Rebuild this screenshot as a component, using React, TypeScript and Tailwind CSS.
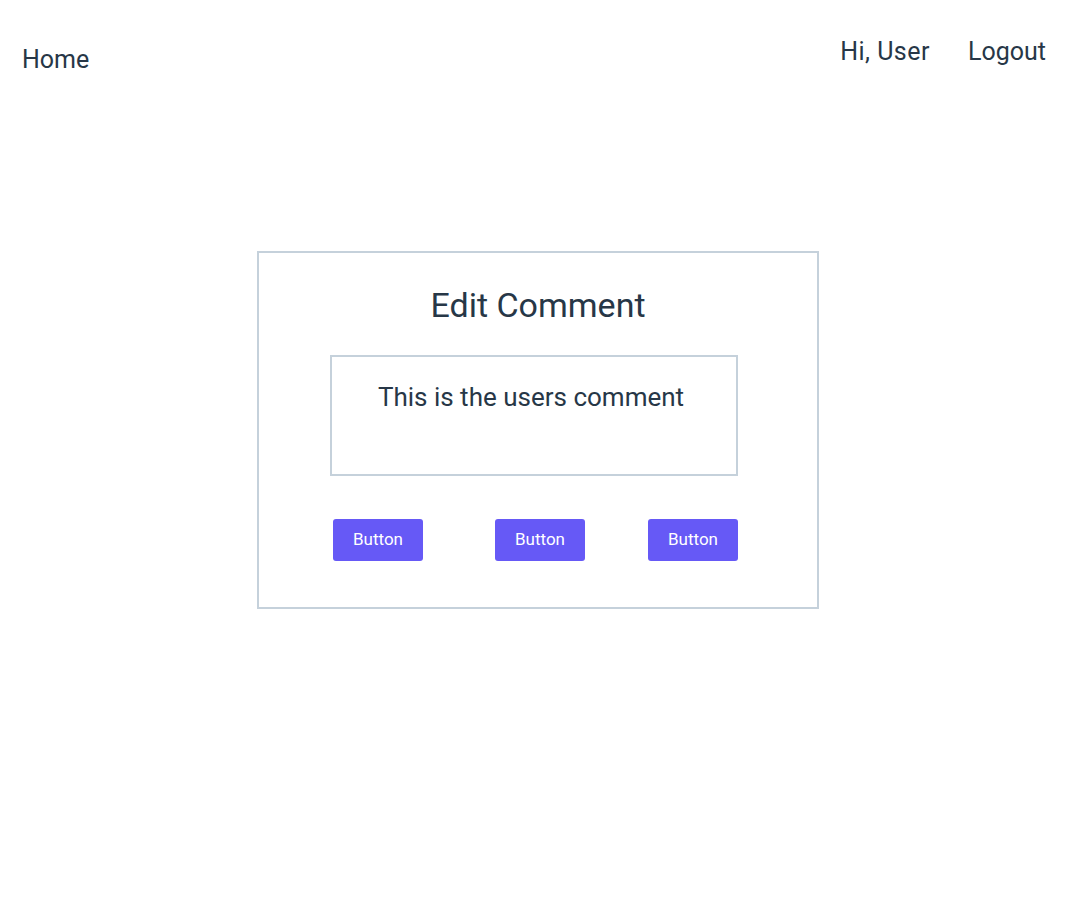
const font = { fontFamily: 'Roboto, "Noto Sans", sans-serif' };

function NavBar() {
  return (
    <header className="flex items-start justify-between pl-[22px] pr-[34px] text-[25px] leading-[30px] text-[#273747]">
      <a href="#" className="mt-[45px]">
        Home
      </a>
      <nav className="mt-[37px] flex gap-[38px]">
        <span className="tracking-[0.5px]">Hi, User</span>
        <a href="#">Logout</a>
      </nav>
    </header>
  );
}

function ActionButton({ className = '' }: { className?: string }) {
  return (
    <button className={`h-[42px] w-[90px] rounded-[3px] bg-[#6659f6] text-[17px] text-white ${className}`}>
      Button
    </button>
  );
}

export default function App() {
  return (
    <div className="min-h-[924px] bg-white" style={font}>
      <NavBar />
      <main className="mt-[176px]">
        <section className="ml-[257px] w-[562px] border-2 border-[#c5d1db] pt-[32px] pb-[46px]">
          <h1 className="text-center text-[34px] leading-[40px] text-[#273747]">Edit Comment</h1>
          <div className="ml-[71px] mt-[30px] h-[121px] w-[408px] border-2 border-[#c5d1db] pt-[25px] pr-[6px] text-center text-[26px] leading-[30px] text-[#273747]">
            This is the users comment
          </div>
          <div className="ml-[74px] mt-[43px] flex">
            <ActionButton />
            <ActionButton className="ml-[72px]" />
            <ActionButton className="ml-[63px]" />
          </div>
        </section>
      </main>
    </div>
  );
}
